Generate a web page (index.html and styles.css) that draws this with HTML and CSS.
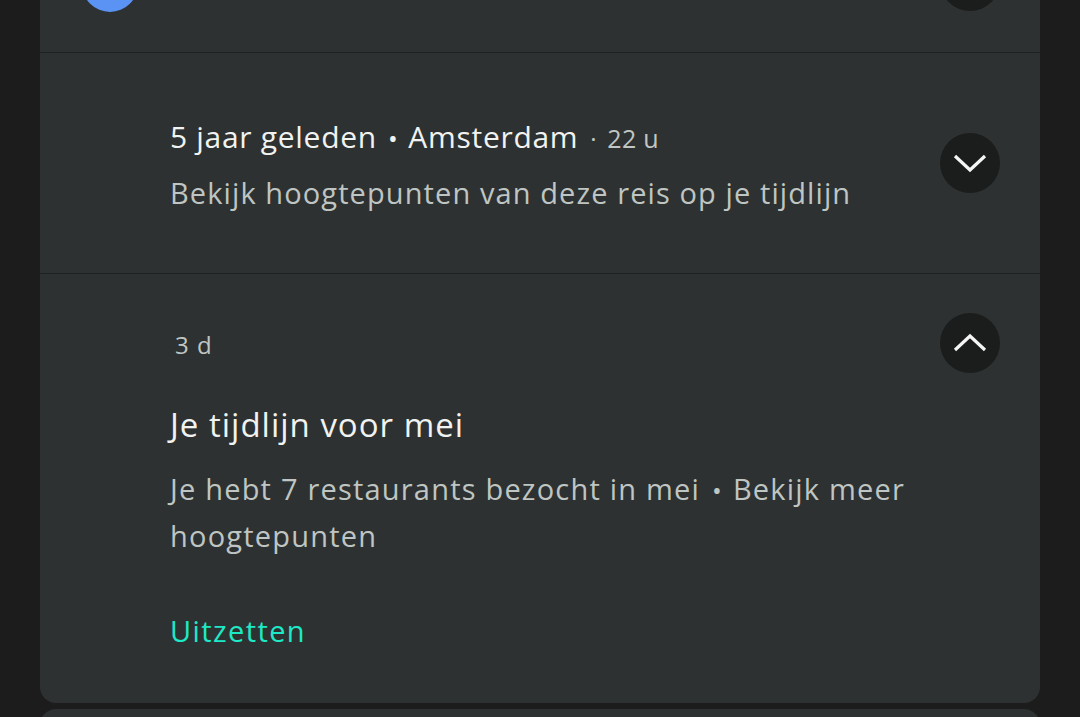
FILE: index.html
```html
<!DOCTYPE html>
<html lang="nl">
<head>
<meta charset="utf-8">
<link rel="stylesheet" href="styles.css">
</head>
<body>
<div class="screen">
  <div class="panel">
    <div class="row row-top">
      <div class="avatar"></div>
      <div class="btn btn-top"></div>
    </div>
    <div class="row row-trip">
      <div class="content trip-content">
        <div class="meta"><span class="title-part">5 jaar geleden</span><span class="dot">•</span><span class="title-part">Amsterdam</span><span class="small-dot">·</span><span class="time">22 u</span></div>
        <div class="sub">Bekijk hoogtepunten van deze reis op je tijdlijn</div>
      </div>
      <div class="btn">
        <svg width="34" height="20" viewBox="0 0 34 20"><path d="M2 3 L17 17 L32 3" fill="none" stroke="#f4f5f4" stroke-width="3.2"/></svg>
      </div>
    </div>
    <div class="row row-expanded">
      <div class="content">
        <div class="age">3 d</div>
        <div class="big">Je tijdlijn voor mei</div>
        <div class="body">Je hebt 7 restaurants bezocht in mei<span class="bdot">•</span>Bekijk meer hoogtepunten</div>
        <div class="action">Uitzetten</div>
      </div>
      <div class="btn">
        <svg width="34" height="20" viewBox="0 0 34 20"><path d="M2 17 L17 3 L32 17" fill="none" stroke="#f4f5f4" stroke-width="3.2"/></svg>
      </div>
    </div>
  </div>
  <div class="panel next"></div>
</div>
</body>
</html>
```

FILE: styles.css
```css
html, body {
  margin: 0;
  padding: 0;
  background: #1b1c1b;
  height: 717px;
  overflow: hidden;
}
.screen {
  font-family: "Open Sans", "Noto Sans", sans-serif;
  padding: 0 40px;
}
.panel {
  background: #2e3131;
  border-radius: 0 0 16px 16px;
  overflow: hidden;
}
.panel.next {
  margin-top: 6px;
  height: 40px;
  border-radius: 16px 16px 0 0;
}
.row {
  display: flex;
  justify-content: space-between;
  padding-right: 40px;
}
.row-top {
  height: 96px;
  margin-top: -44px;
  padding-left: 42px;
  align-items: flex-start;
}
.avatar {
  width: 56px;
  height: 56px;
  border-radius: 50%;
  background: #5b93f5;
}
.btn {
  width: 60px;
  height: 60px;
  border-radius: 50%;
  background: #1b1d1c;
  display: flex;
  align-items: center;
  justify-content: center;
  flex: none;
}
.btn-top {
  margin-top: -5px;
}
.row-trip {
  height: 220px;
  border-top: 1px solid #1f2121;
  align-items: center;
  padding-left: 130px;
}
.trip-content {
  padding-top: 3px;
}
.meta {
  display: flex;
  align-items: baseline;
  color: #f1f3f1;
  font-size: 30px;
  letter-spacing: 0.7px;
  line-height: 40px;
  white-space: nowrap;
}
.dot {
  margin: 0 10px 0 11px;
  font-size: 26px;
}
.small-dot {
  margin: 0 10px 0 12px;
  font-size: 24px;
  color: #c0c6c3;
}
.time {
  font-size: 25px;
  letter-spacing: 0.3px;
  color: #c0c6c3;
}
.sub {
  margin-top: 14px;
  font-size: 29px;
  letter-spacing: 1.1px;
  line-height: 40px;
  color: #bfc5c2;
  white-space: nowrap;
}
.row-expanded {
  height: 430px;
  border-top: 1px solid #1f2121;
  padding-left: 130px;
  padding-top: 39px;
  box-sizing: border-box;
  align-items: flex-start;
}
.age {
  padding-left: 5px;
  font-size: 24px;
  letter-spacing: 1px;
  line-height: 32px;
  color: #c0c6c3;
  margin-top: 16px;
}
.big {
  margin-top: 42px;
  font-size: 33px;
  letter-spacing: 1px;
  line-height: 44px;
  color: #f1f3f1;
}
.body {
  margin-top: 19px;
  font-size: 29px;
  letter-spacing: 1.2px;
  line-height: 45px;
  color: #bfc5c2;
  max-width: 770px;
}
.bdot {
  font-size: 26px;
  margin: 0 10px 0 12px;
}
.action {
  margin-top: 53px;
  font-size: 29px;
  letter-spacing: 1.4px;
  line-height: 40px;
  color: #1de9c7;
}
```
